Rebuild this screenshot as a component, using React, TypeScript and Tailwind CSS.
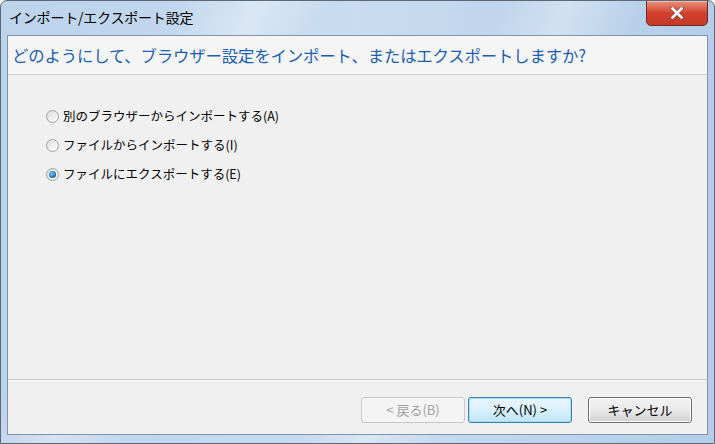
import React from "react";

const jp = { fontFamily: '"Noto Sans CJK JP", "Noto Sans", sans-serif' };

function Radio({ checked }: { checked?: boolean }) {
  return (
    <span className="relative inline-block w-[13px] h-[13px] rounded-full border border-[#a0a0a0] bg-gradient-to-br from-[#dcdcdc] to-[#ffffff] shrink-0">
      {checked && (
        <span className="absolute left-[2px] top-[2px] w-[7px] h-[7px] rounded-full bg-[radial-gradient(circle_at_40%_40%,#7fd0f5,#1f6fb0_60%,#0c4a80)]" />
      )}
    </span>
  );
}

function Btn({ children, variant }: { children: React.ReactNode; variant?: "disabled" | "default" | "normal" }) {
  const base = "w-[104px] h-[26px] flex items-center justify-center rounded-[3px] text-[13px]";
  if (variant === "disabled")
    return <div className={`${base} border border-[#c8c8c8] bg-[#f4f4f4] text-[#a0a0a0]`}>{children}</div>;
  if (variant === "default")
    return (
      <div className={`${base} border border-[#3c7fb1] bg-gradient-to-b from-[#eaf6fd] via-[#d9f0fc] to-[#bee6fd] text-black shadow-[inset_0_0_0_1px_#a9dcf6]`}>
        {children}
      </div>
    );
  return (
    <div className={`${base} border border-[#707070] bg-gradient-to-b from-[#f2f2f2] via-[#ebebeb] to-[#cfcfcf] text-black shadow-[inset_0_0_0_1px_#fcfcfc]`}>
      {children}
    </div>
  );
}

export default function App() {
  return (
    <div style={jp} className="relative w-[715px] h-[444px] overflow-hidden rounded-t-[7px] border border-[#5a6878] bg-gradient-to-r from-[#bcd3ec] via-[#c9dcf0] to-[#b4cde8] flex flex-col">
      <div className="absolute inset-0 bg-[linear-gradient(115deg,transparent_20%,rgba(255,255,255,0.35)_28%,transparent_36%,transparent_55%,rgba(255,255,255,0.3)_62%,transparent_70%)] pointer-events-none" />
      {/* title bar */}
      <div className="relative h-[34px] shrink-0 flex items-start pl-[8px] pt-[5px]">
        <span className="text-[14px] text-black leading-[22px] tracking-[-0.2px]">インポート/エクスポート設定</span>
        <div className="absolute top-[-1px] right-[6px] w-[62px] h-[26px] rounded-b-[5px] border border-[#6b2c22] bg-gradient-to-b from-[#e8907c] via-[#d2402d] to-[#c53a28] flex items-center justify-center shadow-[inset_0_1px_0_rgba(255,255,255,0.4)]">
          <svg width="14" height="12" viewBox="0 0 14 12">
            <path d="M2 1 L12 11 M12 1 L2 11" stroke="#404040" strokeWidth="4" strokeLinecap="square" opacity="0.5" />
            <path d="M2.5 1.5 L11.5 10.5 M11.5 1.5 L2.5 10.5" stroke="#ffffff" strokeWidth="2.6" strokeLinecap="square" />
          </svg>
        </div>
      </div>
      {/* client area */}
      <div className="relative mx-[6px] mb-[8px] flex-1 border border-[#7f93ab] bg-[#f0f0f0] flex flex-col">
        <div className="h-[39px] shrink-0 border-b border-[#cfcfcf] bg-[#f5f5f5] flex items-center pl-[4px]">
          <span className="text-[16.4px] text-[#1a5fb4] tracking-[-0.15px]">
            どのようにして、ブラウザー設定をインポート、またはエクスポートしますか?
          </span>
        </div>
        <div className="flex-1 flex flex-col gap-[9px] pl-[38px] pt-[31px]">
          <label className="flex items-center gap-[4px] h-[20px] text-[12.5px] text-black">
            <Radio />
            <span>別のブラウザーからインポートする(A)</span>
          </label>
          <label className="flex items-center gap-[4px] h-[20px] text-[12.5px] text-black">
            <Radio />
            <span>ファイルからインポートする(I)</span>
          </label>
          <label className="flex items-center gap-[4px] h-[20px] text-[12.5px] text-black">
            <Radio checked />
            <span>ファイルにエクスポートする(E)</span>
          </label>
        </div>
        <div className="h-[55px] shrink-0 border-t border-[#c5c5c5] shadow-[inset_0_1px_0_#ffffff] flex items-start pt-[17px] pl-[353px] gap-[3px]">
          <Btn variant="disabled">&lt; 戻る(B)</Btn>
          <Btn variant="default">次へ(N) &gt;</Btn>
          <div className="w-[10px]" />
          <Btn>キャンセル</Btn>
        </div>
      </div>
    </div>
  );
}
